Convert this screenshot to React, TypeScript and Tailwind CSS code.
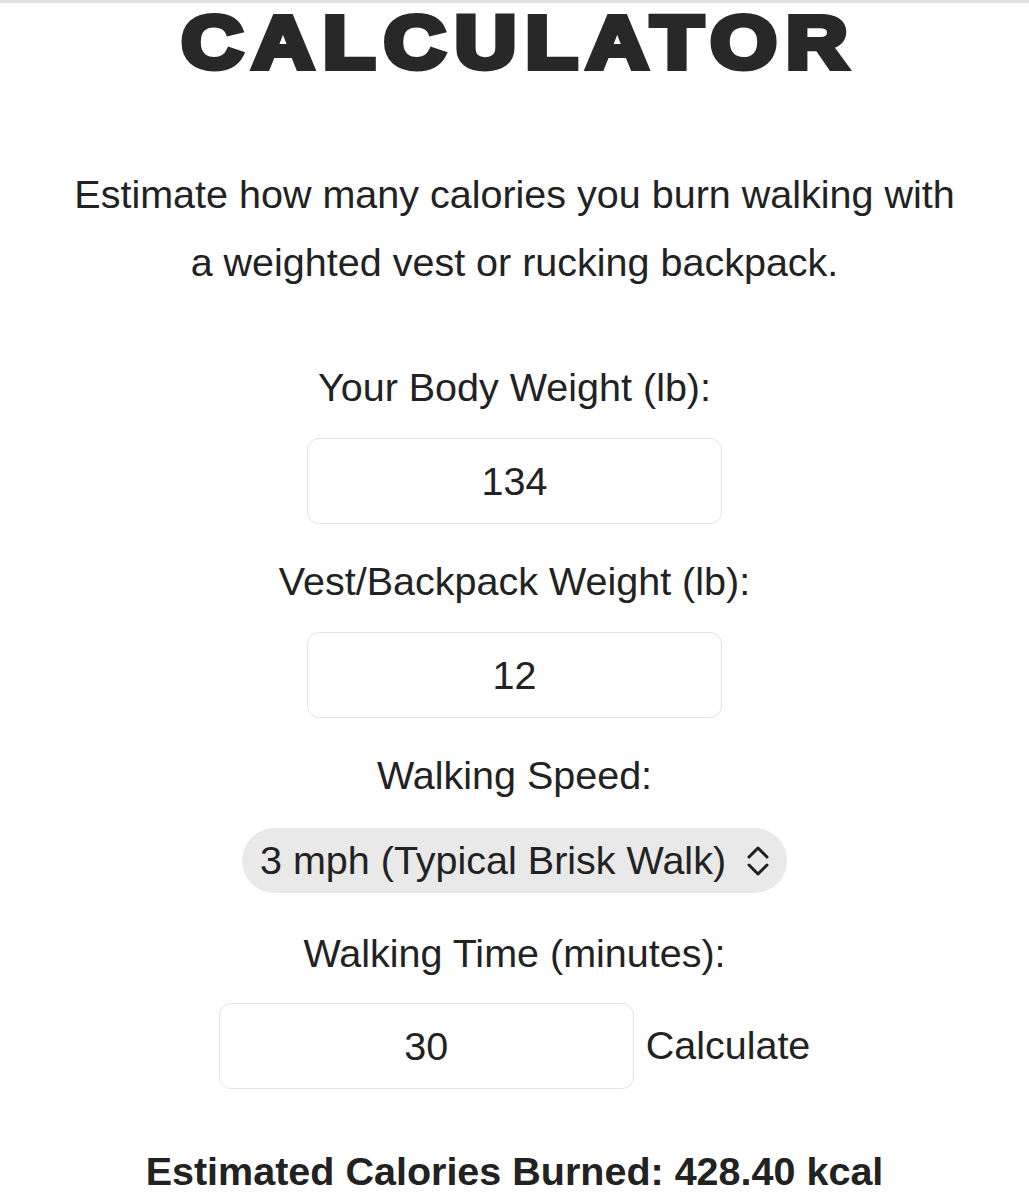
import React, { useState } from 'react';

const SPEEDS = [
  { value: '2', label: '2 mph (Slow Walk)', met: 2.8 },
  { value: '2.5', label: '2.5 mph (Easy Walk)', met: 3.0 },
  { value: '3', label: '3 mph (Typical Brisk Walk)', met: 3.5 },
  { value: '4', label: '4 mph (Fast Walk)', met: 5.0 },
];

const ChevronsUpDown: React.FC = () => (
  <svg width="22" height="30" viewBox="0 0 22 30" fill="none" stroke="#1f1f1f" strokeWidth="3" strokeLinecap="round" strokeLinejoin="round">
    <polyline points="2,11 11,2 20,11" />
    <polyline points="2,19 11,28 20,19" />
  </svg>
);

const Field: React.FC<{ label: string; value: string; onChange: (v: string) => void; first?: boolean }> = ({ label, value, onChange, first }) => (
  <div className={first ? 'mt-[69px] flex flex-col items-center' : 'mt-[35px] flex flex-col items-center'}>
    <label className="leading-[45px]">{label}</label>
    <input
      type="text"
      inputMode="decimal"
      value={value}
      onChange={e => onChange(e.target.value)}
      className="mt-[28px] h-[86px] w-[415px] rounded-[12px] border border-[#e3e3e3] bg-white text-center text-[39.5px] text-[#222] outline-none"
    />
  </div>
);

const App: React.FC = () => {
  const [bodyWeight, setBodyWeight] = useState('134');
  const [packWeight, setPackWeight] = useState('12');
  const [speed, setSpeed] = useState('3');
  const [minutes, setMinutes] = useState('30');
  const [calories, setCalories] = useState('428.40');

  const calculate = () => {
    const met = SPEEDS.find(s => s.value === speed)?.met ?? 3.5;
    const total = (parseFloat(bodyWeight) || 0) + (parseFloat(packWeight) || 0);
    const perMinute = (met * 3.5 * total * 0.0453592 * 1.4) / 200 * 9.5;
    setCalories((perMinute * (parseFloat(minutes) || 0)).toFixed(2));
  };

  return (
    <div className="min-h-screen overflow-hidden bg-white pb-10 font-['Liberation_Sans',Arial,sans-serif] text-[39.5px] text-[#222]">
      <div className="h-[3px] bg-[#e2e2e2]" />

      {/* heavy title: bold face thickened with a stroke and widened */}
      <h1 className="mx-auto w-fit scale-x-[1.15] pl-[8px] text-center text-[74px] font-bold leading-[80px] tracking-[8px] text-[#282828] [-webkit-text-stroke:6px_#282828]">
        CALCULATOR
      </h1>

      <p className="mx-auto mt-[77px] w-[900px] text-center leading-[68px]">
        Estimate how many calories you burn walking with a weighted vest or rucking backpack.
      </p>

      <Field label="Your Body Weight (lb):" value={bodyWeight} onChange={setBodyWeight} first />
      <Field label="Vest/Backpack Weight (lb):" value={packWeight} onChange={setPackWeight} />

      <div className="mt-[35px] flex flex-col items-center">
        <label className="leading-[45px]">Walking Speed:</label>
        <div className="relative mt-[30px]">
          <select
            value={speed}
            onChange={e => setSpeed(e.target.value)}
            className="h-[65px] w-[545px] appearance-none rounded-full bg-[#e9e9e9] pl-[18px] pr-[60px] text-[39.5px] text-[#222] outline-none"
          >
            {SPEEDS.map(s => (
              <option key={s.value} value={s.value}>
                {s.label}
              </option>
            ))}
          </select>
          <span className="pointer-events-none absolute right-[18px] top-[18px]">
            <ChevronsUpDown />
          </span>
        </div>
      </div>

      <div className="mt-[38px] flex flex-col items-center">
        <label className="leading-[45px]">Walking Time (minutes):</label>
        <div className="mt-[27px] flex items-center justify-center gap-3">
          <input
            type="text"
            inputMode="decimal"
            value={minutes}
            onChange={e => setMinutes(e.target.value)}
            className="h-[86px] w-[415px] rounded-[12px] border border-[#e3e3e3] bg-white text-center text-[39.5px] text-[#222] outline-none"
          />
          <button type="button" onClick={calculate} className="bg-transparent p-0 text-[39.5px] text-[#222]">
            Calculate
          </button>
        </div>
      </div>

      <p className="mt-[60px] text-center font-bold leading-[45px]">
        Estimated Calories Burned: {calories} kcal
      </p>
    </div>
  );
};

export default App;
